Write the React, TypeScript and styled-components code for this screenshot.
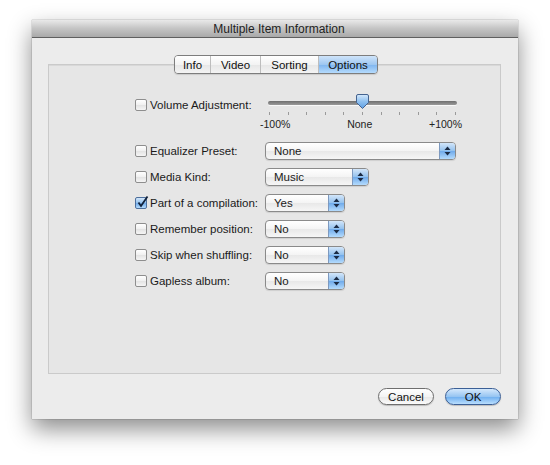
import React from "react";
import styled, { createGlobalStyle } from "styled-components";

const Global = createGlobalStyle`
  html, body { margin: 0; padding: 0; background: #ffffff; }
  body { font-family: "Liberation Sans", Arial, sans-serif; font-size: 11.5px; color: #1a1a1a; }
`;

const Page = styled.div`
  width: 550px;
  height: 465px;
  padding: 20px 0 0 32px;
  box-sizing: border-box;
`;

const Window = styled.div`
  width: 486px;
  height: 399px;
  background: #ececec;
  box-shadow: 0 10px 22px rgba(0, 0, 0, 0.45), 0 0 1px rgba(0, 0, 0, 0.5);
  display: flex;
  flex-direction: column;
`;

const TitleBar = styled.div`
  height: 17px;
  background: linear-gradient(#e9e9e9, #c4c4c4 50%, #a9a9a9);
  border-bottom: 1px solid #5f5f5f;
  display: flex;
  align-items: center;
  justify-content: center;
  font-size: 12px;
  color: #222;
  padding-left: 8px;
`;

const Body = styled.div`
  flex: 1;
  display: flex;
  flex-direction: column;
  padding: 17px 17px 0 16px;
`;

const TabRow = styled.div`
  display: flex;
  justify-content: center;
  position: relative;
  z-index: 1;
  padding-left: 3px;
`;

const Tabs = styled.div`
  display: flex;
  height: 17px;
  border: 1px solid #7d7d7d;
  border-radius: 4px;
  overflow: hidden;
  box-shadow: 0 1px 1px rgba(0, 0, 0, 0.12);
`;

const Tab = styled.div<{ $active?: boolean; $w: number }>`
  width: ${(p) => p.$w}px;
  display: flex;
  align-items: center;
  justify-content: center;
  font-size: 11.5px;
  color: #111;
  border-left: 1px solid #bdbdbd;
  &:first-child { border-left: none; }
  background: ${(p) =>
    p.$active
      ? "linear-gradient(#cfe4fa, #9ec7f1 50%, #7db4ef 51%, #b5dbfd)"
      : "linear-gradient(#ffffff, #f3f3f3 50%, #e6e6e6 51%, #f4f4f4)"};
`;

const GroupBox = styled.div`
  margin-top: -10px;
  height: 310px;
  background: #e6e6e6;
  border: 1px solid #cacaca;
  box-shadow: inset 0 1px 0 #d8d8d8;
  box-sizing: border-box;
  padding: 31px 0 0 86px;
  display: flex;
  flex-direction: column;
`;

const Row = styled.div<{ $h: number }>`
  display: grid;
  grid-template-columns: 130px auto;
  align-items: start;
  height: ${(p) => p.$h}px;
`;

const LabelCell = styled.div`
  display: flex;
  align-items: center;
  gap: 3px;
  height: 18px;
  white-space: nowrap;
`;

const Box = styled.div<{ $checked?: boolean }>`
  width: 10px;
  height: 10px;
  border: 1px solid ${(p) => (p.$checked ? "#4d6f9c" : "#8e8e8e")};
  border-radius: 2px;
  background: ${(p) =>
    p.$checked
      ? "linear-gradient(#d3e6fa, #92c1ee 50%, #6faaea 51%, #b4dbfd)"
      : "linear-gradient(#ffffff, #f0f0f0 50%, #e3e3e3 51%, #f5f5f5)"};
  position: relative;
  flex: none;
`;

const CheckMark = styled.svg`
  position: absolute;
  left: 0px;
  top: -3px;
`;

const Popup = styled.div<{ $w: number }>`
  width: ${(p) => p.$w}px;
  height: 18px;
  box-sizing: border-box;
  border: 1px solid #8a8a8a;
  border-radius: 4px;
  overflow: hidden;
  display: flex;
  background: linear-gradient(#ffffff, #f4f4f4 50%, #e8e8e8 51%, #f6f6f6);
  box-shadow: 0 1px 1px rgba(0, 0, 0, 0.1);
`;

const PopupText = styled.div`
  flex: 1;
  padding-left: 8px;
  display: flex;
  align-items: center;
  font-size: 11.5px;
`;

const PopupArrows = styled.div`
  width: 15px;
  border-left: 1px solid #7d99bf;
  background: linear-gradient(#d3e6fa, #92c1ee 50%, #6faaea 51%, #b4dbfd);
  display: flex;
  align-items: center;
  justify-content: center;
`;

const SliderWrap = styled.div`
  width: 202px;
  display: flex;
  flex-direction: column;
  margin-left: -5px;
  margin-top: -1px;
`;

const TrackArea = styled.div`
  height: 16px;
  position: relative;
  display: flex;
  align-items: center;
  padding: 0 5px 0 8px;
`;

const Track = styled.div`
  flex: 1;
  height: 4px;
  border-radius: 2px;
  background: linear-gradient(#6f6f6f, #9a9a9a);
  box-shadow: 0 1px 0 #f8f8f8;
`;

const Thumb = styled.svg`
  position: absolute;
  left: 96px;
  top: -1px;
`;

const Ticks = styled.div`
  display: flex;
  justify-content: space-between;
  padding: 0 6px 0 9px;
  height: 5px;
  margin-top: 1px;
`;

const Tick = styled.div`
  width: 1px;
  height: 3px;
  background: #9a9a9a;
`;

const ScaleLabels = styled.div`
  display: flex;
  justify-content: space-between;
  font-size: 10.5px;
  color: #222;
  margin-top: 1px;
`;

const Footer = styled.div`
  flex: 1;
  display: flex;
  justify-content: flex-end;
  align-items: flex-start;
  gap: 11px;
  padding-top: 14px;
`;

const PushButton = styled.div<{ $default?: boolean }>`
  width: 56px;
  height: 17px;
  border-radius: 9px;
  box-sizing: border-box;
  border: 1px solid ${(p) => (p.$default ? "#3b5f96" : "#6e6e6e")};
  display: flex;
  align-items: center;
  justify-content: center;
  font-size: 11.5px;
  color: #111;
  background: ${(p) =>
    p.$default
      ? "linear-gradient(#d4e8fc, #97c5f2 50%, #6cadef 51%, #b9defe)"
      : "linear-gradient(#ffffff, #f4f4f4 50%, #e7e7e7 51%, #fbfbfb)"};
  box-shadow: 0 1px 1px rgba(0, 0, 0, 0.2);
`;

const Arrows = () => (
  <svg width="7" height="10" viewBox="0 0 7 10">
    <path d="M3.5 0.5 L6.5 4 L0.5 4 Z" fill="#1b2b44" />
    <path d="M3.5 9.5 L6.5 6 L0.5 6 Z" fill="#1b2b44" />
  </svg>
);

const Check = ({ checked, label }: { checked?: boolean; label: string }) => (
  <LabelCell>
    <Box $checked={checked}>
      {checked && (
        <CheckMark width="13" height="14" viewBox="0 0 13 14">
          <path d="M2.5 7.5 L5 11 L11.5 1.5" fill="none" stroke="#10213a" strokeWidth="1.8" />
        </CheckMark>
      )}
    </Box>
    <span>{label}</span>
  </LabelCell>
);

const PopupButton = ({ w, value }: { w: number; value: string }) => (
  <Popup $w={w}>
    <PopupText>{value}</PopupText>
    <PopupArrows>
      <Arrows />
    </PopupArrows>
  </Popup>
);

export default function App() {
  const ticks = Array.from({ length: 11 });
  return (
    <>
      <Global />
      <Page>
        <Window>
          <TitleBar>Multiple Item Information</TitleBar>
          <Body>
            <TabRow>
              <Tabs>
                <Tab $w={35}>Info</Tab>
                <Tab $w={49}>Video</Tab>
                <Tab $w={57}>Sorting</Tab>
                <Tab $w={58} $active>
                  Options
                </Tab>
              </Tabs>
            </TabRow>
            <GroupBox>
              <Row $h={46}>
                <Check label="Volume Adjustment:" />
                <SliderWrap>
                  <TrackArea>
                    <Track />
                    <Thumb width="13" height="15" viewBox="0 0 13 15">
                      <defs>
                        <linearGradient id="tg" x1="0" y1="0" x2="0" y2="1">
                          <stop offset="0" stopColor="#d6e9fb" />
                          <stop offset="0.5" stopColor="#8fc0ef" />
                          <stop offset="1" stopColor="#5e9fe3" />
                        </linearGradient>
                      </defs>
                      <path
                        d="M2 0.5 H11 Q12.5 0.5 12.5 2 V8.5 L6.5 14.5 L0.5 8.5 V2 Q0.5 0.5 2 0.5 Z"
                        fill="url(#tg)"
                        stroke="#45638f"
                      />
                    </Thumb>
                  </TrackArea>
                  <Ticks>
                    {ticks.map((_, i) => (
                      <Tick key={i} />
                    ))}
                  </Ticks>
                  <ScaleLabels>
                    <span>-100%</span>
                    <span>None</span>
                    <span>+100%</span>
                  </ScaleLabels>
                </SliderWrap>
              </Row>
              <Row $h={26}>
                <Check label="Equalizer Preset:" />
                <PopupButton w={191} value="None" />
              </Row>
              <Row $h={26}>
                <Check label="Media Kind:" />
                <PopupButton w={104} value="Music" />
              </Row>
              <Row $h={26}>
                <Check checked label="Part of a compilation:" />
                <PopupButton w={80} value="Yes" />
              </Row>
              <Row $h={26}>
                <Check label="Remember position:" />
                <PopupButton w={80} value="No" />
              </Row>
              <Row $h={26}>
                <Check label="Skip when shuffling:" />
                <PopupButton w={80} value="No" />
              </Row>
              <Row $h={26}>
                <Check label="Gapless album:" />
                <PopupButton w={80} value="No" />
              </Row>
            </GroupBox>
            <Footer>
              <PushButton>Cancel</PushButton>
              <PushButton $default>OK</PushButton>
            </Footer>
          </Body>
        </Window>
      </Page>
    </>
  );
}
